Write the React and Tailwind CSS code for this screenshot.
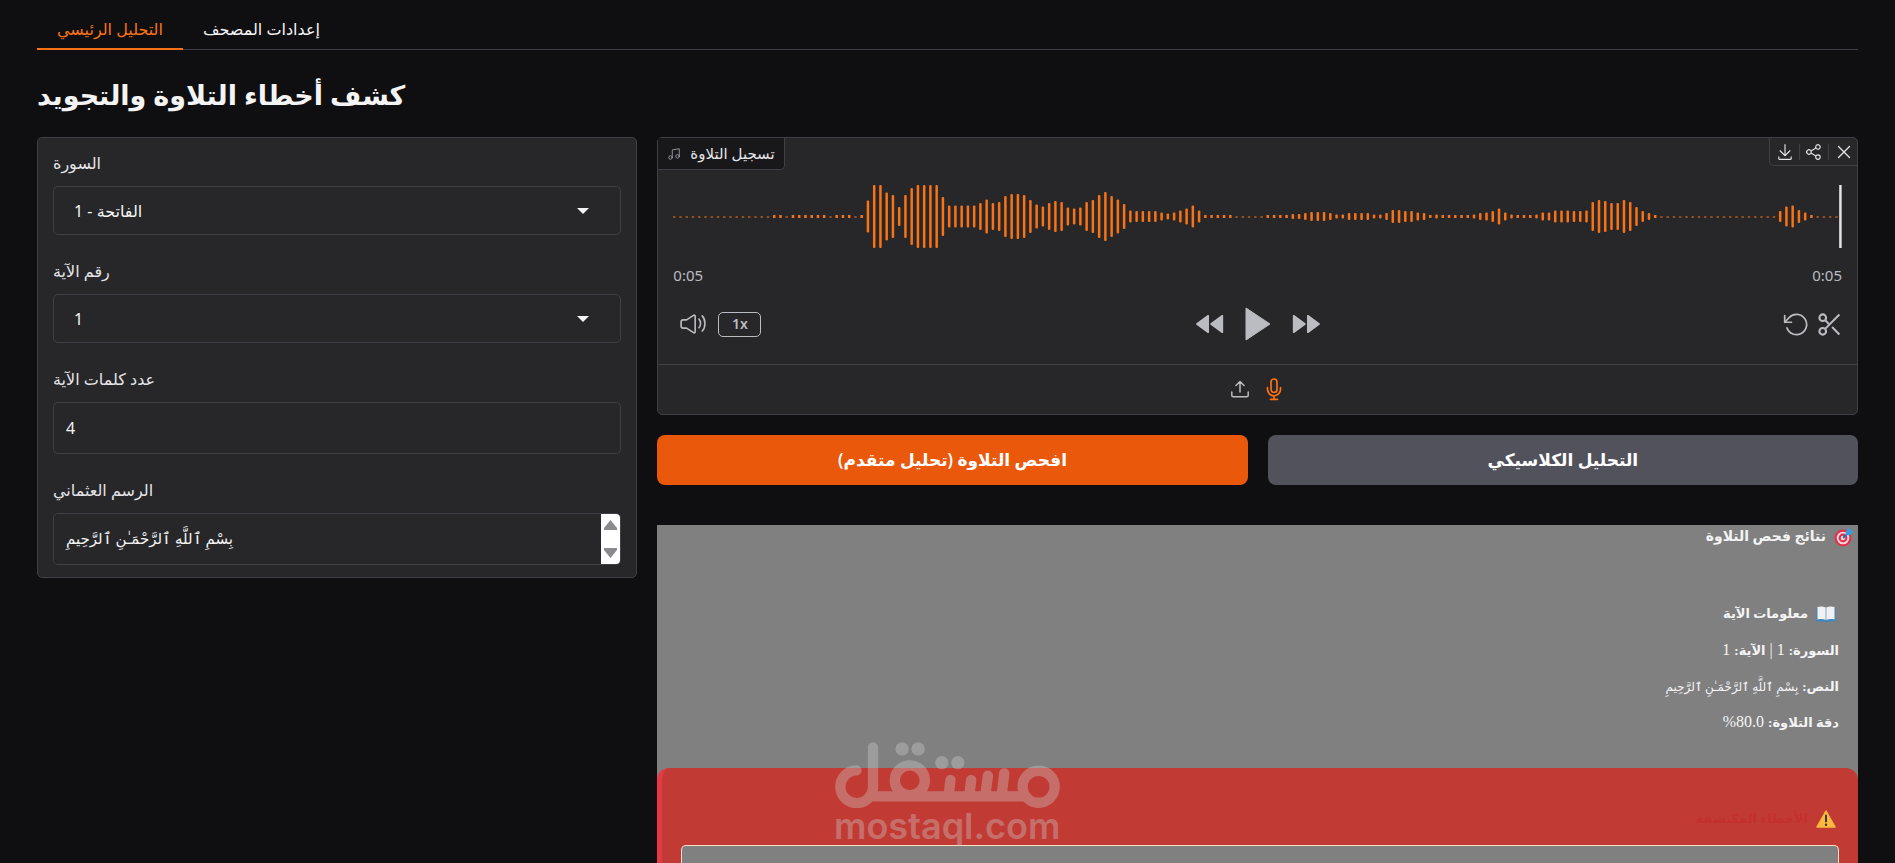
import { useState } from "react";
import { Music, X } from "lucide-react";

const tabs = ["التحليل الرئيسي", "إعدادات المصحف"];

// Bar heights; 1 is a silent sample, 3 is nearly silent
const samples = [
  1, 1, 1, 1, 1, 1, 1, 1, 1, 1, 1, 1, 1, 1, 1, 1, 3, 3, 1, 3, 3, 3, 3, 3, 3, 1, 3, 3, 3, 1, 3,
  32, 63, 63, 48, 43, 19, 43, 57, 63, 63, 63, 63, 39, 22, 22, 22, 22, 22, 27, 34, 27, 29, 41, 45,
  45, 43, 33, 24, 20, 27, 31, 29, 18, 16, 18, 29, 33, 43, 49, 41, 34, 25, 12, 11, 11, 11, 11, 8, 6,
  8, 12, 16, 22, 12, 3, 3, 3, 3, 3, 1, 1, 1, 1, 1, 3, 3, 3, 3, 5, 5, 7, 9, 9, 9, 7, 4, 4, 7, 7, 7,
  7, 4, 4, 7, 13, 13, 11, 11, 8, 7, 3, 4, 3, 3, 3, 3, 3, 4, 7, 8, 11, 16, 8, 4, 3, 3, 3, 4, 8, 8,
  12, 12, 12, 11, 11, 12, 29, 33, 31, 27, 27, 33, 29, 19, 11, 7, 3, 1, 1, 1, 1, 1, 1, 1, 1, 1, 1,
  1, 1, 1, 1, 1, 1, 1, 1, 1, 11, 20, 22, 13, 8, 3, 1, 1, 1, 1,
];

function Waveform() {
  return (
    <svg viewBox="0 0 1169 63" preserveAspectRatio="none" className="h-[63px] w-full" aria-hidden="true">
      {samples.map((h, i) => (
        <rect
          key={i}
          x={i * 6.25}
          y={h === 1 ? 31 : 31.5 - h / 2}
          width="2.5"
          height={h === 1 ? 2 : h}
          rx={h > 3 ? 1 : 0}
          fill="#f97316"
          opacity={h === 1 ? 0.5 : 1}
        />
      ))}
      <rect x="1166.5" y="0" width="2.5" height="63" fill="#e4e4e7" />
    </svg>
  );
}

function DownloadIcon() {
  return (
    <svg viewBox="0 0 32 32" className="size-[18px]" fill="currentColor">
      <path d="M26 24v4H6v-4H4v4a2 2 0 0 0 2 2h20a2 2 0 0 0 2-2v-4zm0-10l-1.41-1.41L17 20.17V2h-2v18.17l-7.59-7.58L6 14l10 10l10-10z" />
    </svg>
  );
}

function ShareIcon() {
  return (
    <svg viewBox="0 0 32 32" className="size-[18px]" fill="currentColor">
      <path d="M23 20a5 5 0 0 0-3.89 1.89l-7.31-4.57a4.46 4.46 0 0 0 0-2.64l7.31-4.57A5 5 0 1 0 18 7a4.79 4.79 0 0 0 .2 1.32l-7.31 4.57a5 5 0 1 0 0 6.22l7.31 4.57A4.79 4.79 0 0 0 18 25a5 5 0 1 0 5-5m0-16a3 3 0 1 1-3 3a3 3 0 0 1 3-3M7 19a3 3 0 1 1 3-3a3 3 0 0 1-3 3m16 9a3 3 0 1 1 3-3a3 3 0 0 1-3 3" />
    </svg>
  );
}

function VolumeIcon() {
  return (
    <svg viewBox="0 0 24 24" className="size-[26px]" fill="none" stroke="currentColor" strokeWidth="1.5" strokeLinecap="round">
      <path d="M1 13.86V10.14C1 9.04 1.9 8.14 3 8.14h2.9c.2 0 .39-.06.55-.16l6-3.96c.66-.44 1.55.04 1.55.84v14.28c0 .8-.89 1.28-1.55.84l-6-3.96a1 1 0 0 0-.55-.16H3c-1.1 0-2-.9-2-2Z" />
      <path d="M17.5 7.5S19 9 19 11.5s-1.5 4-1.5 4M20.5 4.5S23 7 23 11.5s-2.5 7-2.5 7" />
    </svg>
  );
}

function RewindIcon() {
  return (
    <svg viewBox="0 0 24 24" className="size-[34px]" fill="currentColor">
      <path d="M21.044 5.704a.6.6 0 0 1 .956.483v11.626a.6.6 0 0 1-.956.483l-7.889-5.813a.6.6 0 0 1 0-.966l7.89-5.813ZM11.044 5.704a.6.6 0 0 1 .956.483v11.626a.6.6 0 0 1-.956.483l-7.888-5.813a.6.6 0 0 1 0-.966l7.888-5.813Z" />
    </svg>
  );
}

function PlayIcon() {
  return (
    <svg viewBox="0 0 26 34" className="h-[34px] w-[26px]" fill="currentColor" stroke="currentColor" strokeLinejoin="round">
      <path d="M1 1 25 17 1 33Z" />
    </svg>
  );
}

function ForwardIcon() {
  return (
    <svg viewBox="0 0 24 24" className="size-[34px]" fill="currentColor">
      <path d="M2.956 5.704A.6.6 0 0 0 2 6.187v11.626a.6.6 0 0 0 .956.483l7.889-5.813a.6.6 0 0 0 0-.966l-7.89-5.813ZM12.956 5.704a.6.6 0 0 0-.956.483v11.626a.6.6 0 0 0 .956.483l7.889-5.813a.6.6 0 0 0 0-.966l-7.89-5.813Z" />
    </svg>
  );
}

function UndoIcon() {
  return (
    <svg viewBox="0 0 24 24" className="size-[27px]" fill="none" stroke="currentColor" strokeWidth="1.5" strokeLinecap="round" strokeLinejoin="round">
      <path d="M1.5 4v6h6" />
      <path d="M3.51 15a9 9 0 1 0 2.13-9.36L1.5 10" />
    </svg>
  );
}

function ScissorsIcon() {
  return (
    <svg viewBox="0 0 24 24" className="size-[25px]" fill="none" stroke="currentColor" strokeWidth="2">
      <circle cx="5.5" cy="5.5" r="3.2" />
      <circle cx="5.5" cy="18.5" r="3.2" />
      <path d="M21.5 2.5 7.8 16.2M7.8 7.8l3.4 3.4M14.5 14.5l7 7" />
    </svg>
  );
}

function UploadIcon() {
  return (
    <svg viewBox="0 0 20 20" className="size-5" fill="none" stroke="currentColor" strokeWidth="1.5" strokeLinecap="round" strokeLinejoin="round">
      <path d="M10 13V2.5M6 6.5l4-4 4 4M1.8 13v3.2c0 .9.6 1.5 1.5 1.5h13.4c.9 0 1.5-.6 1.5-1.5V13" />
    </svg>
  );
}

function MicIcon() {
  return (
    <svg viewBox="0 0 16 24" className="h-6 w-4" fill="none" stroke="currentColor" strokeWidth="1.7" strokeLinecap="round">
      <rect x="5" y="2" width="6" height="13.5" rx="3" />
      <path d="M1.5 10.5v1.8a6.5 6.5 0 0 0 13 0v-1.8M8 19v3M4.5 22.3h7" />
    </svg>
  );
}

function TargetIcon() {
  return (
    <svg viewBox="0 0 20 20" className="size-5">
      <circle cx="9" cy="11" r="8.5" fill="#e0314b" />
      <circle cx="9" cy="11" r="6.3" fill="#f3d9df" />
      <circle cx="9" cy="11" r="4.4" fill="#e0314b" />
      <circle cx="9" cy="11" r="2.3" fill="#f3d9df" />
      <path d="M9 11 15 5" stroke="#1d6fa8" strokeWidth="1.8" />
      <path d="M11.5 8.5 12 4 15.5.3l1 3.2 3.4.8L16 8Z" fill="#3b9be0" />
    </svg>
  );
}

function BookIcon() {
  return (
    <svg viewBox="0 0 20 18" className="h-[18px] w-5">
      <path d="M.5 3.5h19v13h-8l-1.5 1-1.5-1h-8Z" fill="#3b88c3" />
      <path d="M1.5 2c3-.8 6-.8 8.2.6V15c-2.2-1.2-5.2-1.2-8.2-.6ZM18.5 2c-3-.8-6-.8-8.2.6V15c2.2-1.2 5.2-1.2 8.2-.6Z" fill="#f1f1f3" />
      <path d="M10 2.6V15" stroke="#b9c4cf" strokeWidth=".7" />
    </svg>
  );
}

function WarningIcon() {
  return (
    <svg viewBox="0 0 20 18" className="h-[18px] w-5">
      <path d="M10 1 19 17H1Z" fill="#fbb93d" stroke="#fbb93d" strokeWidth="1.5" strokeLinejoin="round" />
      <path d="M10 5.5v6" stroke="#3a3a3a" strokeWidth="2" strokeLinecap="round" />
      <circle cx="10" cy="14.7" r="1.2" fill="#3a3a3a" />
    </svg>
  );
}

function Watermark() {
  return (
    <div className="pointer-events-none absolute top-[217px] left-[178px] w-[225px] text-[#d0d0d0] opacity-35">
      <svg viewBox="585 96 674 199" className="w-full" fill="none" stroke="currentColor" strokeWidth="31" strokeLinecap="round">
        <path d="M649 181A49 49 0 1 0 699 229V112" />
        <path d="M699 259H1160" strokeLinecap="butt" />
        <circle cx="809" cy="211" r="45" />
        <circle cx="1195" cy="230" r="48" />
        <path d="M931 210l-5 40M993 210l-5 40M1043 197l-7 53M1092 190l-7 60" />
        <g fill="currentColor" stroke="none">
          <circle cx="786" cy="117" r="20" />
          <circle cx="834" cy="117" r="20" />
          <circle cx="905" cy="158" r="20" />
          <circle cx="953" cy="158" r="20" />
        </g>
      </svg>
      <p className="text-center font-[Inter,sans-serif] text-[36px] leading-9 font-semibold">mostaql.com</p>
    </div>
  );
}

function Dropdown({ id, label, option }) {
  return (
    <div>
      <label htmlFor={id} className="mb-[13px] block text-base leading-[19px] text-zinc-200">
        {label}
      </label>
      <div className="relative">
        <select
          id={id}
          className="h-[49px] w-full appearance-none rounded-[5px] border border-zinc-700 bg-zinc-800 px-5 text-base text-zinc-100"
        >
          <option>{option}</option>
        </select>
        <svg viewBox="0 0 12 6" className="pointer-events-none absolute top-[22px] right-8 h-[6px] w-3" fill="#f4f4f5">
          <path d="M0 0h12L6 6Z" />
        </svg>
      </div>
    </div>
  );
}

function VersePanel() {
  return (
    <section className="flex min-w-0 flex-1 flex-col gap-[27px] rounded-[5px] border border-zinc-700 bg-zinc-800 px-[15px] pt-4 pb-3">
      <Dropdown id="surah" label="السورة" option="1 - الفاتحة" />
      <Dropdown id="ayah" label="رقم الآية" option="1" />
      <div>
        <label htmlFor="words" className="mb-[13px] block text-base leading-[19px] text-zinc-200">
          عدد كلمات الآية
        </label>
        <input
          id="words"
          defaultValue="4"
          className="block h-[52px] w-full rounded-[5px] border border-zinc-700 bg-zinc-800 px-3 text-base text-zinc-100"
        />
      </div>
      <div>
        <label htmlFor="uthmani" className="mb-[13px] block text-base leading-[19px] text-zinc-200">
          الرسم العثماني
        </label>
        <div className="flex h-[52px] overflow-hidden rounded-[5px] border border-zinc-700">
          <textarea
            id="uthmani"
            rows={1}
            defaultValue="بِسْمِ ٱللَّهِ ٱلرَّحْمَـٰنِ ٱلرَّحِيمِ"
            className="min-w-0 flex-1 resize-none overflow-hidden bg-zinc-800 px-3 py-3 text-[15px] leading-6 text-zinc-100"
          />
          <div className="flex w-[19px] flex-col items-center justify-between bg-white py-[6px]">
            <svg viewBox="0 0 13 10" className="h-[10px] w-[13px]" fill="#8b8b8f">
              <path d="M6.5 0 13 8v2H0V8Z" />
            </svg>
            <svg viewBox="0 0 13 10" className="h-[10px] w-[13px]" fill="#8b8b8f">
              <path d="M6.5 10 13 2V0H0v2Z" />
            </svg>
          </div>
        </div>
      </div>
    </section>
  );
}

function AudioPanel() {
  return (
    <section className="rounded-[5px] border border-zinc-700 bg-zinc-800 text-[#bbbbc2]">
      <div className="flex items-start justify-between">
        <div className="flex h-8 items-center gap-[9px] rounded-br-[5px] border-r border-b border-zinc-700 bg-[#18181b] px-[9px] text-[15px] text-zinc-200">
          <Music className="size-[14px] text-zinc-400" strokeWidth={1.5} />
          تسجيل التلاوة
        </div>
        <div className="flex h-7 items-center gap-1 rounded-bl-[5px] border-b border-l border-zinc-700 pr-[2px] pl-[5px] text-zinc-200">
          <button aria-label="Download" className="px-px">
            <DownloadIcon />
          </button>
          <span className="h-4 w-px bg-zinc-700" />
          <button aria-label="Share" className="px-px">
            <ShareIcon />
          </button>
          <span className="h-4 w-px bg-zinc-700" />
          <button aria-label="Clear">
            <X className="size-[22px]" strokeWidth={1.5} />
          </button>
        </div>
      </div>
      <div className="px-[15px] pt-[15px]">
        <Waveform />
        <div className="mt-[15px] flex justify-between text-[15px] leading-6">
          <time>0:05</time>
          <time>0:05</time>
        </div>
        <div className="mt-3 grid h-[50px] grid-cols-3 items-center">
          <div className="flex items-center gap-3 pl-[7px]">
            <button aria-label="Volume">
              <VolumeIcon />
            </button>
            <button className="h-[25px] w-[43px] rounded-[5px] border border-[#bbbbc2] text-sm leading-5 font-semibold">
              1x
            </button>
          </div>
          <div className="flex items-center justify-center gap-[19px]">
            <button aria-label="Rewind">
              <RewindIcon />
            </button>
            <button aria-label="Play">
              <PlayIcon />
            </button>
            <button aria-label="Forward">
              <ForwardIcon />
            </button>
          </div>
          <div className="flex items-center justify-end gap-[7px]">
            <button aria-label="Undo">
              <UndoIcon />
            </button>
            <button aria-label="Trim">
              <ScissorsIcon />
            </button>
          </div>
        </div>
      </div>
      <div className="mt-[15px] flex h-[50px] items-center justify-center gap-4 border-t border-zinc-700 pr-[3px] pb-[2px]">
        <button aria-label="Upload">
          <UploadIcon />
        </button>
        <button aria-label="Microphone" className="text-[#f97316]">
          <MicIcon />
        </button>
      </div>
    </section>
  );
}

function Results() {
  return (
    <section dir="rtl" className="relative mt-10 flex flex-1 flex-col bg-[#808080] font-['Liberation_Serif','DejaVu_Sans',serif] text-base text-zinc-100">
      <h2 className="flex h-6 items-center gap-2 px-1 text-sm font-bold">
        <TargetIcon />
        نتائج فحص التلاوة
      </h2>
      <div className="mt-[53px] px-[19px]">
        <h3 className="flex h-6 items-center gap-2 px-[3px] text-[13px] font-bold">
          <BookIcon />
          معلومات الآية
        </h3>
        <p className="mt-3 h-6 leading-6">
          <strong className="text-[13px]">السورة:</strong> 1 | <strong className="text-[13px]">الآية:</strong> 1
        </p>
        <p className="mt-3 h-6 leading-6">
          <strong className="text-[13px]">النص:</strong>{" "}
          <span className="text-[12px]">بِسْمِ ٱللَّهِ ٱلرَّحْمَـٰنِ ٱلرَّحِيمِ</span>
        </p>
        <p className="mt-3 h-6 leading-6">
          <strong className="text-[13px]">دقة التلاوة:</strong> 80.0%
        </p>
      </div>
      <div className="mt-[34px] flex flex-1 flex-col rounded-t-xl border-l-[5px] border-[#e63946] bg-[#c13b34] px-[19px] pt-[39px]">
        <h3 className="flex h-6 items-center gap-2 px-[3px] text-[13px] font-bold text-[#c42f30]">
          <WarningIcon />
          الأخطاء المكتشفة
        </h3>
        <div className="mt-[14px] flex-1 rounded-t-[5px] border border-b-0 border-[#fbdcc4] bg-[#808080]" />
      </div>
      <Watermark />
    </section>
  );
}

export default function App() {
  const [active, setActive] = useState(0);

  return (
    <div className="flex min-h-screen flex-col bg-[#0f0f11] px-[37px] font-['Noto_Sans','DejaVu_Sans',sans-serif] text-zinc-100">
      <nav className="flex h-[50px] items-end border-b border-zinc-700">
        {tabs.map((tab, i) => (
          <button
            key={tab}
            onClick={() => setActive(i)}
            className={`-mb-px h-10 border-b-2 px-5 text-base ${
              i === active ? "border-[#f97316] text-[#f97316]" : "border-transparent text-zinc-100"
            }`}
          >
            {tab}
          </button>
        ))}
      </nav>
      <h1 className="mt-[25px] mb-[22px] text-[27px] leading-10 font-bold">كشف أخطاء التلاوة والتجويد</h1>
      <main className="flex flex-1 gap-5">
        <div className="flex min-w-0 flex-1 flex-col">
          <div className="flex">
            <VersePanel />
          </div>
        </div>
        <div className="flex min-w-0 flex-[2] flex-col">
          <AudioPanel />
          <div className="mt-5 flex gap-5">
            <button className="h-[50px] flex-1 rounded-lg bg-[#ea580c] text-[17px] font-semibold text-white">
              افحص التلاوة (تحليل متقدم)
            </button>
            <button className="h-[50px] flex-1 rounded-lg bg-zinc-600 text-[17px] font-semibold text-white">
              التحليل الكلاسيكي
            </button>
          </div>
          <Results />
        </div>
      </main>
    </div>
  );
}
